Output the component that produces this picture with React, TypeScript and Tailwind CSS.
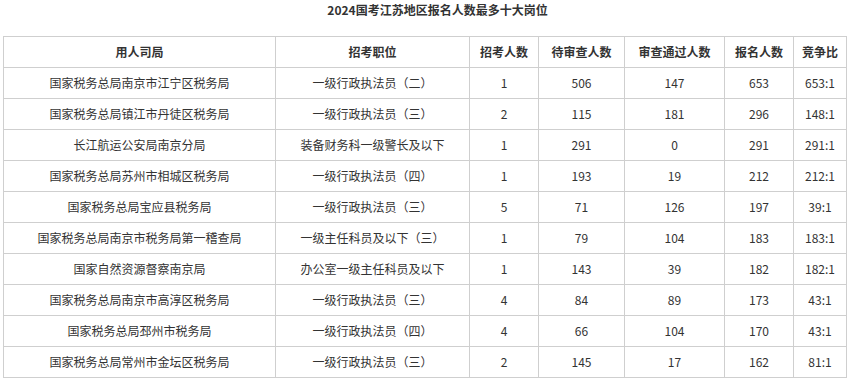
const COLS = [272, 194, 69, 86, 100, 69, 53];

const HEAD = ["用人司局", "招考职位", "招考人数", "待审查人数", "审查通过人数", "报名人数", "竞争比"];

const ROWS: string[][] = [
  ["国家税务总局南京市江宁区税务局", "一级行政执法员（二）", "1", "506", "147", "653", "653:1"],
  ["国家税务总局镇江市丹徒区税务局", "一级行政执法员（三）", "2", "115", "181", "296", "148:1"],
  ["长江航运公安局南京分局", "装备财务科一级警长及以下", "1", "291", "0", "291", "291:1"],
  ["国家税务总局苏州市相城区税务局", "一级行政执法员（四）", "1", "193", "19", "212", "212:1"],
  ["国家税务总局宝应县税务局", "一级行政执法员（三）", "5", "71", "126", "197", "39:1"],
  ["国家税务总局南京市税务局第一稽查局", "一级主任科员及以下（三）", "1", "79", "104", "183", "183:1"],
  ["国家自然资源督察南京局", "办公室一级主任科员及以下", "1", "143", "39", "182", "182:1"],
  ["国家税务总局南京市高淳区税务局", "一级行政执法员（三）", "4", "84", "89", "173", "43:1"],
  ["国家税务总局邳州市税务局", "一级行政执法员（四）", "4", "66", "104", "170", "43:1"],
  ["国家税务总局常州市金坛区税务局", "一级行政执法员（三）", "2", "145", "17", "162", "81:1"],
];

export default function App() {
  return (
    <div className="w-[850px] h-[381px] bg-white text-[#333] text-[12px] font-['Noto_Sans_CJK_SC','Noto_Sans',sans-serif]">
      <div className="h-[36px] pl-[25px] pt-[1px] text-center font-bold leading-[18px]">
        2024国考江苏地区报名人数最多十大岗位
      </div>
      <table className="ml-[3px] table-fixed border-collapse w-[843px]">
        <colgroup>
          {COLS.map((w, i) => (
            <col key={i} style={{ width: w }} />
          ))}
        </colgroup>
        <thead>
          <tr>
            {HEAD.map((h) => (
              <th key={h} className="h-[31px] border border-[#cfcfcf] p-0 text-center font-bold leading-none">
                {h}
              </th>
            ))}
          </tr>
        </thead>
        <tbody>
          {ROWS.map((r, i) => (
            <tr key={i}>
              {r.map((c, j) => (
                <td key={j} className="h-[31px] border border-[#cfcfcf] p-0 text-center leading-none whitespace-nowrap">
                  {c}
                </td>
              ))}
            </tr>
          ))}
        </tbody>
      </table>
    </div>
  );
}
